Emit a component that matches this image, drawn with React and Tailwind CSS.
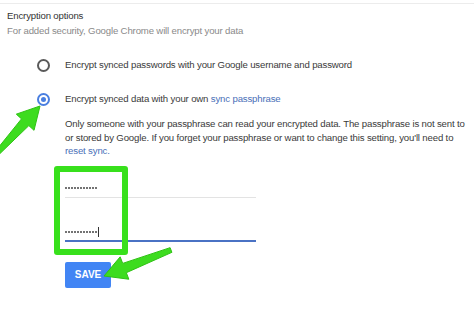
import React from 'react';

function Radio({ checked }) {
  return (
    <span
      className={
        'flex h-[13px] w-[13px] shrink-0 items-center justify-center rounded-full border-2 ' +
        (checked ? 'border-[#4a7fe0]' : 'border-[#5a5a5a]')
      }
    >
      {checked && <span className="h-[5px] w-[5px] rounded-full bg-[#4a7fe0]" />}
    </span>
  );
}

function Dots({ count }) {
  return (
    <span className="flex gap-[1px]">
      {Array.from({ length: count }).map((_, i) => (
        <span key={i} className="h-[2px] w-[2px] rounded-full bg-[#444]" />
      ))}
    </span>
  );
}

function GreenArrow({ className, x1, y1, x2, y2 }) {
  // thick tapered arrow pointing from (x1,y1) to (x2,y2)
  const dx = x2 - x1;
  const dy = y2 - y1;
  const len = Math.hypot(dx, dy);
  const ux = dx / len;
  const uy = dy / len;
  const nx = -uy;
  const ny = ux;
  const head = 22;
  const hw = 12;
  const bx = x2 - ux * head;
  const by = y2 - uy * head;
  const pts = [
    [x1 + nx * 2.5, y1 + ny * 2.5],
    [bx + nx * 5, by + ny * 5],
    [bx + nx * hw, by + ny * hw],
    [x2, y2],
    [bx - nx * hw, by - ny * hw],
    [bx - nx * 5, by - ny * 5],
    [x1 - nx * 2.5, y1 - ny * 2.5],
  ];
  return (
    <svg className={className} width="474" height="328" viewBox="0 0 474 328">
      <polygon
        points={pts.map((p) => p.join(',')).join(' ')}
        fill="#3ddc1f"
        stroke="#2fc214"
        strokeWidth="1"
        strokeLinejoin="round"
      />
    </svg>
  );
}

export default function App() {
  return (
    <div
      className="relative h-[328px] w-[474px] overflow-hidden bg-white text-[9.6px] tracking-[-0.15px] text-[#3a3a3a]"
      style={{ fontFamily: '"Liberation Sans", Arial, sans-serif' }}
    >
      <div className="h-[4px] border-b border-[#ececec]" />

      <div className="px-[7px] pt-[5px]">
        <div className="leading-[14px] text-[#333]">Encryption options</div>
        <div className="leading-[15px] text-[#8a8a8a]">
          For added security, Google Chrome will encrypt your data
        </div>
      </div>

      <div className="mt-[19px] flex h-[16px] items-center pl-[37px]">
        <Radio />
        <span className="ml-[15px]">Encrypt synced passwords with your Google username and password</span>
      </div>

      <div className="mt-[18px] flex h-[16px] items-center pl-[37px]">
        <Radio checked />
        <span className="ml-[15px]">
          Encrypt synced data with your own <span className="text-[#4a6fb8]">sync passphrase</span>
        </span>
      </div>

      <div className="mt-[10px] pl-[65px] pr-[6px] leading-[13.5px]">
        Only someone with your passphrase can read your encrypted data. The passphrase is not sent to
        or stored by Google. If you forget your passphrase or want to change this setting, you'll need to{' '}
        <span className="text-[#4a6fb8]">reset sync.</span>
      </div>

      <div className="ml-[65px] mt-[13px] w-[191px]">
        <div className="flex h-[27px] items-end border-b border-[#e3e3e3] pb-[8px]">
          <Dots count={11} />
        </div>
        <div className="flex h-[44px] items-end border-b-2 border-[#4a72c4] pb-[7px]">
          <Dots count={11} />
          <span className="mb-[-4px] ml-[1px] h-[10px] w-px bg-[#333]" />
        </div>
      </div>

      <div className="ml-[65px] mt-[20px]">
        <div className="flex h-[26px] w-[46px] items-center justify-center rounded-[2px] bg-[#4285f4] text-[10px] font-bold tracking-normal text-white">
          SAVE
        </div>
      </div>

      <div className="absolute left-[54px] top-[166px] h-[89px] w-[74px] rounded-[3px] border-[6px] border-[#38e01c]" />

      <GreenArrow className="absolute left-0 top-0" x1={-2} y1={152} x2={40} y2={106} />
      <GreenArrow className="absolute left-0 top-0" x1={171} y1={250} x2={104} y2={276} />
    </div>
  );
}
